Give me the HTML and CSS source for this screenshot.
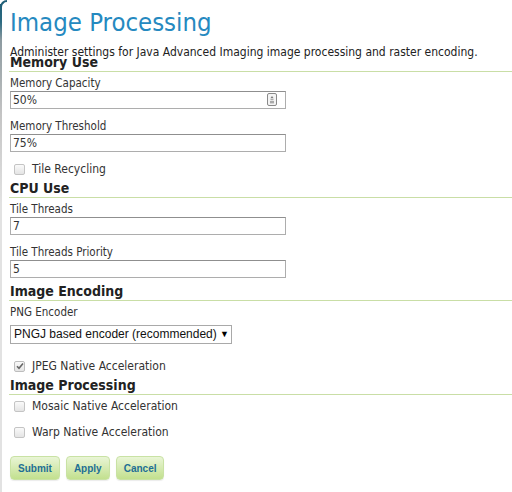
FILE: index.html
```html
<!DOCTYPE html>
<html>
<head>
<meta charset="utf-8">
<link rel="stylesheet" href="styles.css">
</head>
<body>
<div class="page">
  <h1 class="title">Image Processing</h1>
  <p class="desc">Administer settings for Java Advanced Imaging image processing and raster encoding.</p>

  <h3 class="section first-section">Memory Use</h3>
  <div class="field">
    <label class="label">Memory Capacity</label>
    <div class="input">50%<span class="spin"><svg width="10" height="13" viewBox="0 0 10 13"><rect x="0.5" y="0.5" width="9" height="12" rx="1.5" fill="#f4f4f4" stroke="#8a8a8a"/><path d="M5 3 L6.6 5.2 H3.4 Z" fill="#777"/><rect x="3.5" y="6.2" width="3" height="1" fill="#999"/><rect x="3" y="8" width="4" height="2.4" fill="#aaa"/></svg></span></div>
  </div>
  <div class="field">
    <label class="label">Memory Threshold</label>
    <div class="input">75%</div>
  </div>
  <div class="check"><span class="box"></span>Tile Recycling</div>

  <h3 class="section">CPU Use</h3>
  <div class="field">
    <label class="label">Tile Threads</label>
    <div class="input">7</div>
  </div>
  <div class="field">
    <label class="label">Tile Threads Priority</label>
    <div class="input">5</div>
  </div>

  <h3 class="section">Image Encoding</h3>
  <div class="field">
    <label class="label">PNG Encoder</label>
    <div class="select">PNGJ based encoder (recommended) <span class="arrow">▼</span></div>
  </div>
  <div class="check jpeg"><span class="box checked"><svg width="8" height="8" viewBox="0 0 8 8"><path d="M1 4.2 L3 6.3 L7 1.5" fill="none" stroke="#666" stroke-width="1.6"/></svg></span>JPEG Native Acceleration</div>

  <h3 class="section">Image Processing</h3>
  <div class="check first">
    <span class="box"></span>Mosaic Native Acceleration</div>
  <div class="check second">
    <span class="box"></span>Warp Native Acceleration</div>

  <div class="buttons">
    <button class="btn">Submit</button>
    <button class="btn">Apply</button>
    <button class="btn">Cancel</button>
  </div>
</div>
</body>
</html>
```
FILE: styles.css
```css
html, body {
  margin: 0;
  padding: 0;
  background: #fff;
}
body {
  font-family: "DejaVu Sans Condensed", "DejaVu Sans", Verdana, sans-serif;
  color: #333;
  width: 512px;
  height: 492px;
  overflow: hidden;
}
.page {
  position: relative;
  padding-left: 8px;
  padding-top: 7px;
  border-left: 2px solid #e2e2e2;
  border-top-left-radius: 7px;
  min-height: 492px;
  box-sizing: border-box;
}
.page::before {
  content: "";
  position: absolute;
  left: -2px;
  top: 4px;
  width: 2px;
  height: 200px;
  background: linear-gradient(#1f5f78 0, #2d6b82 18px, #8c9aa0 36px, #c4c4c4 110px, #e2e2e2 200px);
}
.page::after {
  content: "";
  position: absolute;
  left: -2px;
  top: 0;
  width: 7px;
  height: 7px;
  border-top: 2px solid #1f5f78;
  border-left: 2px solid #1f5f78;
  border-top-left-radius: 7px;
  box-sizing: border-box;
}
.title {
  margin: 0;
  font-weight: normal;
  font-size: 25.5px;
  line-height: 30px;
  color: #2589c0;
}
.desc {
  margin: 8px 0 0;
  font-size: 12px;
  line-height: 14px;
  color: #222;
}
.section {
  margin: 5px 0 0 -1px;
  padding: 0 0 1px 1px;
  font-size: 14px;
  line-height: 16px;
  font-weight: bold;
  color: #222;
  border-bottom: 1px solid #c9dea6;
}
.section.first-section {
  margin-top: -5px;
}
.field {
  margin-top: 11px;
}
.section + .field {
  margin-top: 5px;
}
.label {
  display: block;
  font-size: 11.5px;
  line-height: 12px;
  color: #333;
  margin-bottom: 2px;
}
.input {
  position: relative;
  width: 276px;
  height: 18px;
  box-sizing: border-box;
  border: 1px solid #adadad;
  border-top-color: #8f8f8f;
  font-size: 12px;
  line-height: 16px;
  padding-left: 2px;
  color: #333;
}
.spin {
  position: absolute;
  right: 8px;
  top: 1px;
  line-height: 0;
}
.check {
  display: flex;
  align-items: center;
  font-size: 12px;
  line-height: 14px;
  color: #333;
  margin-top: 9px;
  padding-left: 4px;
  height: 16px;
}
.box {
  width: 11px;
  height: 11px;
  box-sizing: border-box;
  border: 1px solid #c4c4c4;
  border-radius: 2px;
  background: linear-gradient(#fafafa, #e4e4e4);
  margin-right: 7px;
  display: flex;
  align-items: center;
  justify-content: center;
}
.box.checked {
  border-color: #bdbdbd;
}
.check + .section {
  margin-top: 3px;
}
.select {
  width: 222px;
  height: 19px;
  box-sizing: border-box;
  border: 1px solid #a9a9a9;
  font-family: "Liberation Sans", Arial, sans-serif;
  font-size: 12px;
  line-height: 17px;
  padding-left: 3px;
  color: #111;
  margin-top: 7px;
  white-space: nowrap;
}
.arrow {
  font-size: 9px;
  vertical-align: 1px;
  color: #000;
}
.check.jpeg {
  margin-top: 14px;
}
.check.first {
  margin-top: 3px;
}
.check.second {
  margin-top: 10px;
}
.buttons {
  display: flex;
  gap: 6px;
  margin-top: 16px;
}
.btn {
  height: 24px;
  padding: 0 7px;
  border: 1px solid #c9e2a4;
  border-radius: 4px;
  background: linear-gradient(#e9f5d6, #c2e08e);
  font-family: "Liberation Sans", Arial, sans-serif;
  font-weight: bold;
  font-size: 10px;
  color: #1e6f95;
  box-shadow: 0 1px 1px rgba(0,0,0,0.08);
}
```
